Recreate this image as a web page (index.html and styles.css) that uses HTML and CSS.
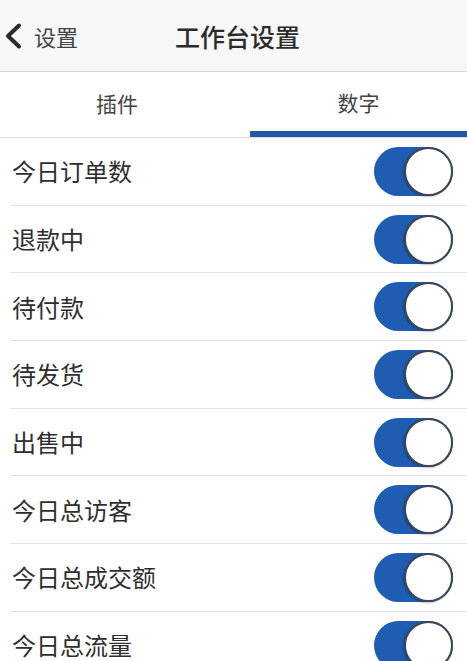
FILE: index.html
```html
<!DOCTYPE html>
<html lang="zh-CN">
<head>
    <meta charset="UTF-8">
    <meta name="viewport" content="width=device-width, initial-scale=1.0">
    <title>工作台设置</title>
    <link rel="stylesheet" href="styles.css">
</head>
<body>
    <!-- Header -->
    <div class="header">
        <div class="back">
            <svg class="chevron" width="22" height="28" viewBox="0 0 22 28">
                <path d="M17 3.5 L6 14 L17 24.5" fill="none" stroke="#2b2b2b" stroke-width="4" stroke-linecap="round" stroke-linejoin="round"/>
            </svg>
            <span>设置</span>
        </div>
        <h1 class="title">工作台设置</h1>
    </div>

    <!-- Tabs -->
    <div class="tabs">
        <div class="tab"><span class="tab-label left">插件</span></div>
        <div class="tab active"><span class="tab-label">数字</span></div>
    </div>

    <!-- Settings List -->
    <ul class="list">
        <li class="row"><span>今日订单数</span><span class="switch on"></span></li>
        <li class="row"><span>退款中</span><span class="switch on"></span></li>
        <li class="row"><span>待付款</span><span class="switch on"></span></li>
        <li class="row"><span>待发货</span><span class="switch on"></span></li>
        <li class="row"><span>出售中</span><span class="switch on"></span></li>
        <li class="row"><span>今日总访客</span><span class="switch on"></span></li>
        <li class="row"><span>今日总成交额</span><span class="switch on"></span></li>
        <li class="row"><span>今日总流量</span><span class="switch on"></span></li>
    </ul>
</body>
</html>
```

FILE: styles.css
```css
/* General Styles */
body {
    margin: 0;
    padding: 0;
    font-family: "Noto Sans CJK SC", "Noto Sans", sans-serif;
    color: #333;
    background-color: #fff;
    overflow: hidden;
}

/* Header */
.header {
    height: 71px;
    background-color: #f7f7f7;
    border-bottom: 1px solid #d6d6d6;
    display: flex;
    align-items: center;
    justify-content: center;
    position: relative;
}

.back {
    position: absolute;
    left: 2px;
    top: 0;
    height: 71px;
    display: flex;
    align-items: center;
    gap: 10px;
    font-size: 22px;
    color: #444;
}

.title {
    margin: 0 0 0 8px;
    font-size: 25px;
    font-weight: 500;
    color: #2b2b2b;
}

/* Tabs */
.tabs {
    display: flex;
    height: 65px;
    border-bottom: 1px solid #e0e0e0;
}

.tab {
    flex: 1;
    display: flex;
    align-items: center;
    justify-content: center;
    font-size: 21px;
    color: #444;
    padding-bottom: 4px;
    box-sizing: border-box;
}

.tab-label.left {
    margin-right: 16px;
}

.tab.active {
    flex: 0 0 217px;
    border-bottom: 6px solid #2158a8;
    padding-bottom: 0;
}

/* List */
.list {
    list-style: none;
    margin: 0;
    padding: 0 0 0 11px;
}

.row {
    height: 66.7px;
    border-bottom: 1px solid #e2e2e2;
    display: flex;
    align-items: center;
    justify-content: space-between;
    padding-right: 14px;
    font-size: 24px;
    color: #2e2e2e;
}

.row span:first-child {
    padding-left: 1px;
    padding-bottom: 1px;
}

.switch {
    width: 79px;
    height: 49px;
    border-radius: 25px;
    background-color: #1f5db3;
    position: relative;
    box-sizing: border-box;
}

.switch::after {
    content: "";
    position: absolute;
    right: 0;
    top: 0;
    width: 49px;
    height: 49px;
    border-radius: 50%;
    background-color: #fff;
    border: 2px solid #3d4654;
    box-sizing: border-box;
    box-shadow: -1px 1px 2px rgba(0, 0, 0, 0.25);
}
```
